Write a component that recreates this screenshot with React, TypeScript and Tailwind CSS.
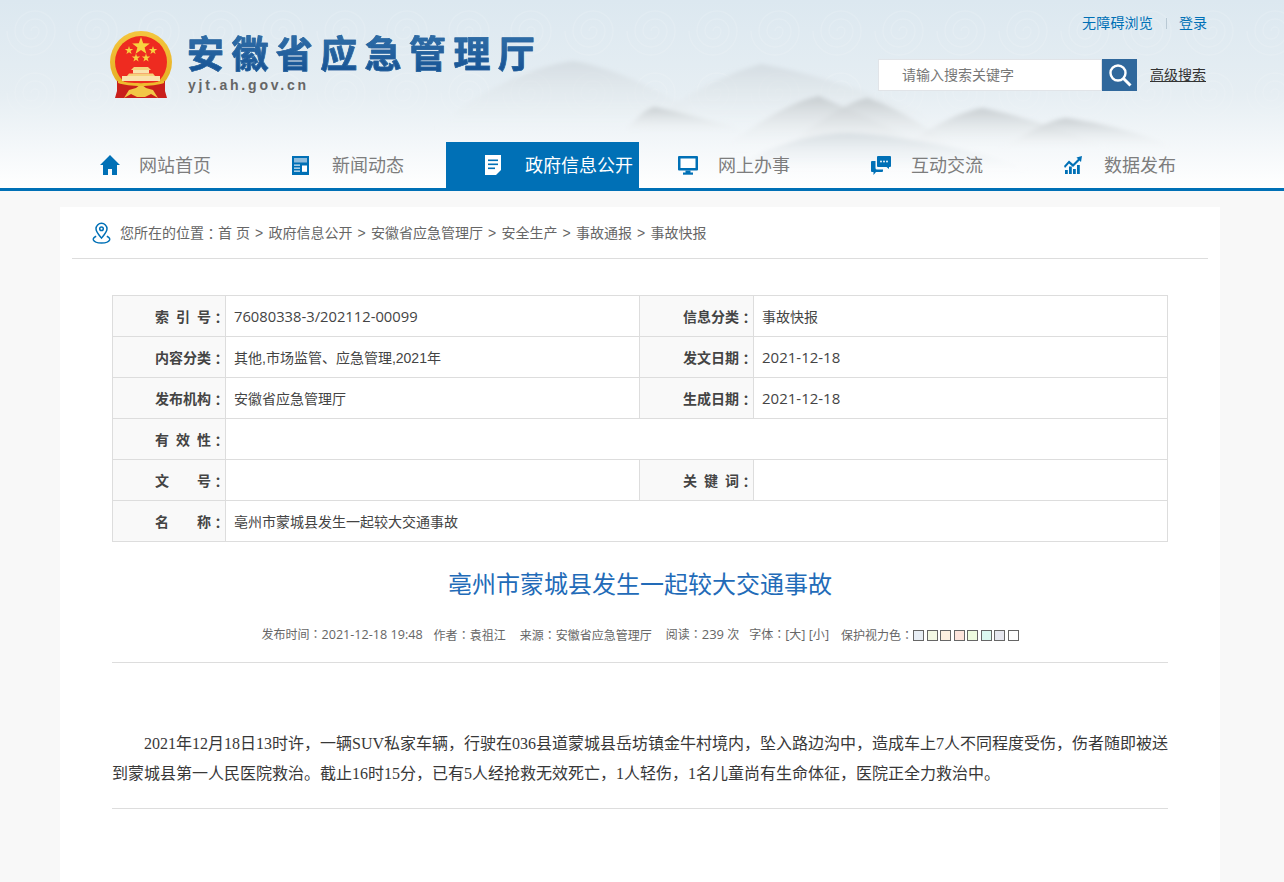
const cn = "font-['Liberation_Sans','Noto_Sans_CJK_SC',sans-serif]";
const latin = "font-['Open_Sans','Noto_Sans_CJK_SC',sans-serif]";

function Emblem() {
  return (
    <svg width="64" height="68" viewBox="0 0 64 68" className="shrink-0">
      <defs>
        <linearGradient id="ring" x1="0" y1="0" x2="0" y2="1">
          <stop offset="0" stopColor="#f4c63e" />
          <stop offset="1" stopColor="#e3ab20" />
        </linearGradient>
      </defs>
      <circle cx="32" cy="31" r="31" fill="url(#ring)" />
      <circle cx="32" cy="31" r="26" fill="#ee2b20" />
      <polygon points="32,6 34.2,12.2 40.8,12.4 35.6,16.4 37.4,22.8 32,19 26.6,22.8 28.4,16.4 23.2,12.4 29.8,12.2" fill="#f8d23f" />
      <polygon points="20,15 21,18 24.2,18 21.6,20 22.6,23 20,21.2 17.4,23 18.4,20 15.8,18 19,18" fill="#f8d23f" />
      <polygon points="44,15 45,18 48.2,18 45.6,20 46.6,23 44,21.2 41.4,23 42.4,20 39.8,18 43,18" fill="#f8d23f" />
      <polygon points="27,22.5 28,25.5 31.2,25.5 28.6,27.5 29.6,30.5 27,28.7 24.4,30.5 25.4,27.5 22.8,25.5 26,25.5" fill="#f8d23f" />
      <polygon points="37,22.5 38,25.5 41.2,25.5 38.6,27.5 39.6,30.5 37,28.7 34.4,30.5 35.4,27.5 32.8,25.5 36,25.5" fill="#f8d23f" />
      <path d="M25 36 L39 36 L42 39 L22 39 Z" fill="#f5d27c" />
      <rect x="24" y="39" width="16" height="3.5" fill="#f9e3ae" />
      <path d="M20 42.5 L44 42.5 L46 45 L18 45 Z" fill="#f5d27c" />
      <rect x="13" y="45" width="38" height="5" fill="#f9e3ae" />
      <path d="M8 50 C20 53 44 53 56 50 L56 60 L58 67 L6 67 L8 60 Z" fill="#c91f1b" />
      <path d="M15 67 L20 59 L27 57 L32 53 L37 57 L44 59 L49 67 L42 63 L36 66 L28 66 L22 63 Z" fill="#f2c747" />
      <path d="M9 49.5 C20 53 44 53 55 49.5 L55 52 C44 56 20 56 9 52 Z" fill="#eebb2e" />
    </svg>
  );
}

const hills = [
  { d: "M434 130 C470 95 530 66 573 61 C620 68 680 100 720 130 Z", fill: "url(#hillBack)" },
  { d: "M640 130 C680 95 730 72 761 64 C810 72 900 100 960 130 Z", fill: "url(#hillBack)" },
  { d: "M620 135 C635 120 645 108 655 107 C680 112 730 125 760 135 Z", fill: "url(#hill)" },
  { d: "M720 150 C760 120 795 100 819 96 C850 110 900 130 930 150 Z", fill: "url(#hill)" },
  { d: "M780 150 C820 120 850 100 868 98 C900 108 930 130 960 150 Z", fill: "url(#hill)" },
  { d: "M900 150 C930 125 965 110 983 108 C1020 115 1080 135 1110 150 Z", fill: "url(#hill)" },
  { d: "M1000 150 C1030 130 1050 120 1065 118 C1100 122 1150 135 1180 150 Z", fill: "url(#hill)" },
  { d: "M730 170 C770 145 810 133 850 133 C900 135 980 150 1030 170 Z", fill: "url(#hillBack)" },
];

function HeaderBackdrop() {
  return (
    <svg className="absolute inset-0 h-full w-full" viewBox="0 0 1284 188" preserveAspectRatio="none">
      <defs>
        <pattern id="swirl" width="62" height="62" patternUnits="userSpaceOnUse">
          <path d="M31 31 a4 4 0 0 1 8 0 a8 8 0 0 1 -16 0 a12 12 0 0 1 24 0 a16 16 0 0 1 -32 0 a20 20 0 0 1 40 0 a24 24 0 0 1 -48 0" fill="none" stroke="#ffffff" strokeOpacity="0.14" strokeWidth="1.4" />
        </pattern>
        <linearGradient id="fade" x1="0" y1="0" x2="0" y2="1">
          <stop offset="0" stopColor="#ffffff" stopOpacity="1" />
          <stop offset="0.42" stopColor="#ffffff" stopOpacity="1" />
          <stop offset="0.82" stopColor="#ffffff" stopOpacity="0" />
        </linearGradient>
        <mask id="patternFade">
          <rect width="1284" height="188" fill="url(#fade)" />
        </mask>
        <linearGradient id="hill" x1="0" y1="0" x2="0" y2="1">
          <stop offset="0" stopColor="#c4cacd" stopOpacity="0.9" />
          <stop offset="1" stopColor="#f5f7f8" stopOpacity="0" />
        </linearGradient>
        <linearGradient id="hillBack" x1="0" y1="0" x2="0" y2="1">
          <stop offset="0" stopColor="#d0d8dd" stopOpacity="0.75" />
          <stop offset="1" stopColor="#eef2f4" stopOpacity="0" />
        </linearGradient>
        <filter id="soft"><feGaussianBlur stdDeviation="2.2" /></filter>
      </defs>
      <rect width="1284" height="188" fill="url(#swirl)" mask="url(#patternFade)" />
      <g filter="url(#soft)">
        {hills.map((h) => (
          <path key={h.d} d={h.d} fill={h.fill} />
        ))}
      </g>
    </svg>
  );
}

function NavIcon({ name }: { name: string }) {
  if (name === "home")
    return (
      <svg width="22" height="22" viewBox="0 0 22 22" fill="#0070b6">
        <path d="M11 1 L21 11 L18 11 L18 21 L13 21 L13 15 L9 15 L9 21 L4 21 L4 11 L1 11 Z" />
      </svg>
    );
  if (name === "news")
    return (
      <svg width="17" height="19" viewBox="0 0 17 19">
        <rect width="17" height="19" fill="#0070b6" />
        <rect x="2" y="2" width="13" height="4.5" fill="#8fbcdc" />
        <rect x="2" y="8.5" width="6" height="1.3" fill="#cfe3f1" />
        <rect x="2" y="11.5" width="6" height="1.3" fill="#cfe3f1" />
        <rect x="2" y="14.5" width="6" height="1.3" fill="#cfe3f1" />
        <rect x="10" y="9.5" width="5" height="6.3" fill="#fff" />
      </svg>
    );
  if (name === "doc")
    return (
      <svg width="16" height="20" viewBox="0 0 16 20">
        <path d="M0 0 H16 V15 L11 20 H0 Z" fill="#fff" />
        <rect x="3" y="4.5" width="10" height="1.6" fill="#0070b6" />
        <rect x="3" y="8.5" width="10" height="1.6" fill="#0070b6" />
        <rect x="3" y="12.5" width="7" height="1.6" fill="#0070b6" />
      </svg>
    );
  if (name === "screen")
    return (
      <svg width="20" height="19" viewBox="0 0 20 19">
        <rect x="0" y="0" width="20" height="14.5" rx="1" fill="#0070b6" />
        <rect x="2.5" y="2.5" width="15" height="9.5" fill="#fff" />
        <rect x="7.5" y="14.5" width="5" height="2.5" fill="#0070b6" />
        <rect x="5" y="16.5" width="10" height="2.2" fill="#0070b6" />
      </svg>
    );
  if (name === "chat")
    return (
      <svg width="20" height="19" viewBox="0 0 20 19" fill="#0070b6">
        <path d="M6 1 a1 1 0 0 1 1 -1 H19 a1 1 0 0 1 1 1 V10 a1 1 0 0 1 -1 1 H18 V13 L15.5 11 H7 a1 1 0 0 1 -1 -1 Z" />
        <path d="M4.5 5 V12 a1.5 1.5 0 0 0 1.5 1.5 H12 V15 a1 1 0 0 1 -1 1 H5 L2.5 19 V16 H1 a1 1 0 0 1 -1 -1 V6 a1 1 0 0 1 1 -1 Z" />
        <circle cx="10" cy="5.5" r="0.9" fill="#fff" />
        <circle cx="13" cy="5.5" r="0.9" fill="#fff" />
        <circle cx="16" cy="5.5" r="0.9" fill="#fff" />
      </svg>
    );
  return (
    <svg width="18" height="18" viewBox="0 0 18 18" fill="#0070b6">
      <path d="M0 10 L5 4.5 L9 8 L14 3 L12.5 1.5 L18 0 L17 6 L15.5 4.5 L9 11 L5 7.5 L1 12 Z" />
      <rect x="1" y="14" width="2.8" height="4" />
      <rect x="5" y="10.5" width="2.8" height="7.5" />
      <rect x="9" y="13" width="2.8" height="5" />
      <rect x="13" y="9" width="2.8" height="9" />
    </svg>
  );
}

const navItems = [
  { label: "网站首页", icon: "home" },
  { label: "新闻动态", icon: "news" },
  { label: "政府信息公开", icon: "doc", active: true },
  { label: "网上办事", icon: "screen" },
  { label: "互动交流", icon: "chat" },
  { label: "数据发布", icon: "chart" },
];

function Header() {
  return (
    <header className="relative h-[191px] shrink-0 border-b-[3px] border-[#0070b6] bg-gradient-to-b from-[#dce8f0] via-[#e6eef3] via-50% to-white">
      <HeaderBackdrop />
      <div className="relative flex h-[142px] justify-between pl-[109px] pr-[77px]">
        <div className="flex items-start gap-[14px] pt-[31px]">
          <Emblem />
          <div className="pt-[3px]">
            <div className={`${cn} h-[44px] whitespace-nowrap bg-gradient-to-b from-[#2f6ea8] to-[#124f92] bg-clip-text text-[37px] leading-[44px] font-bold tracking-[7.4px] text-transparent [-webkit-text-stroke:0.6px_#2a659f]`}>
              安徽省应急管理厅
            </div>
            <div className="mt-[-2px] pl-[1px] font-['Liberation_Sans',sans-serif] text-[14px] leading-[18px] font-bold tracking-[2.8px] text-[#666666]">
              yjt.ah.gov.cn
            </div>
          </div>
        </div>
        <div className={`${cn} flex w-[329px] flex-col items-end pt-[13px]`}>
          <div className="flex h-[20px] items-center text-[14px] leading-[20px] text-[#0070b6]">
            <span className="tracking-[0.2px]">无障碍浏览</span>
            <span className="mx-[12.5px] h-[11px] w-px bg-[#b9c9d4]" />
            <span>登录</span>
          </div>
          <div className="mt-[26px] flex h-[32px] items-center self-start">
            <div className="flex h-[32px] w-[224px] items-center border border-[#e1e4e8] bg-white pl-[23px] text-[14px] text-[#777777]">
              请输入搜索关键字
            </div>
            <div className="flex h-[32px] w-[35px] items-center justify-center bg-[#30689c]">
              <svg width="26" height="26" viewBox="0 0 26 26" fill="none" stroke="#fff">
                <circle cx="11" cy="11" r="7.5" strokeWidth="2.4" />
                <path d="M16.5 16.5 L23.5 23.5" strokeWidth="3" />
              </svg>
            </div>
            <span className="ml-[13px] text-[14px] leading-[20px] text-[#333333] underline">高级搜索</span>
          </div>
        </div>
      </div>
      <nav className={`${cn} relative ml-[60px] flex h-[46px] w-[1158px]`}>
        {navItems.map((item) => (
          <div
            key={item.label}
            className={`flex h-[46px] w-[193px] items-center text-[18px] ${item.active ? "bg-[#0070b6] text-white" : "text-[#7d7d7d]"}`}
          >
            <span className="flex w-[79px] justify-start pl-[39px]">
              <NavIcon name={item.icon} />
            </span>
            <span className="whitespace-nowrap pt-[2px]">{item.label}</span>
          </div>
        ))}
      </nav>
    </header>
  );
}

const crumbs = ["首 页", "政府信息公开", "安徽省应急管理厅", "安全生产", "事故通报", "事故快报"];

function Colon({ className }: { className?: string }) {
  return <span className={`font-['Noto_Sans_CJK_TC',sans-serif] ${className ?? ""}`}>：</span>;
}

function Breadcrumb() {
  return (
    <div className="mx-[12px] flex h-[52px] items-center border-b border-[#dddddd] pl-[20px] text-[14px] text-[#666666]">
      <svg width="19" height="22" viewBox="0 0 19 22" fill="none" stroke="#0070b6" strokeWidth="1.5" className="mr-[9px] shrink-0">
        <path d="M9.5 16 C6.5 12.5 4 10 4 6.8 a5.5 5.5 0 0 1 11 0 C15 10 12.5 12.5 9.5 16 Z" />
        <circle cx="9.5" cy="6.8" r="1.8" />
        <path d="M4.2 14.2 C1.5 15.2 1 17 1.4 18 C2.4 20.3 6 21 9.5 21 C13 21 16.6 20.3 17.6 18 C18 17 17.5 15.2 14.8 14.2" />
      </svg>
      <span className="flex items-center pt-[2px]">
        <span>您所在的位置</span>
        <Colon />
        {crumbs.map((c, i) => (
          <span key={c} className="flex items-center">
            {i > 0 && <span className="flex w-[18.5px] justify-center text-[14px]">&gt;</span>}
            <span className="whitespace-pre">{c}</span>
          </span>
        ))}
      </span>
    </div>
  );
}

function Label({ children }: { children: string }) {
  return (
    <td className="h-[41px] border border-[#dddddd] bg-[#f9f9f9] pt-[2px] text-[14px] font-bold text-[#444444]">
      <div className="flex justify-end">
        <span className="flex w-[56px] justify-between">
          {Array.from(children).map((c) => (
            <span key={c}>{c}</span>
          ))}
        </span>
        <Colon className="w-[14px] text-center" />
      </div>
    </td>
  );
}

function Val({ children, span, wide }: { children?: string; span?: number; wide?: boolean }) {
  return (
    <td colSpan={span} className={`h-[41px] border border-[#dddddd] pl-[8px] text-[#444444] ${wide ? `${latin} text-[15px]` : "pt-[2px] text-[14px]"}`}>
      {children}
    </td>
  );
}

function InfoTable() {
  return (
    <table className={`${cn} w-[1056px] table-fixed border-collapse`}>
      <colgroup>
        <col className="w-[113px]" />
        <col className="w-[414px]" />
        <col className="w-[114px]" />
        <col />
      </colgroup>
      <tbody>
        <tr>
          <Label>索引号</Label>
          <td className={`${latin} h-[41px] border border-[#dddddd] pl-[8px] text-[14.75px] text-[#444444]`}>76080338-3/202112-00099</td>
          <Label>信息分类</Label>
          <Val>事故快报</Val>
        </tr>
        <tr>
          <Label>内容分类</Label>
          <Val>其他,市场监管、应急管理,2021年</Val>
          <Label>发文日期</Label>
          <Val wide>2021-12-18</Val>
        </tr>
        <tr>
          <Label>发布机构</Label>
          <Val>安徽省应急管理厅</Val>
          <Label>生成日期</Label>
          <Val wide>2021-12-18</Val>
        </tr>
        <tr>
          <Label>有效性</Label>
          <Val span={3} />
        </tr>
        <tr>
          <Label>文号</Label>
          <Val />
          <Label>关键词</Label>
          <Val />
        </tr>
        <tr>
          <Label>名称</Label>
          <Val span={3}>亳州市蒙城县发生一起较大交通事故</Val>
        </tr>
      </tbody>
    </table>
  );
}

const swatches = ["bg-[#e8eef5]", "bg-[#f3f8e4]", "bg-[#fdf0e0]", "bg-[#fde4dc]", "bg-[#eefbdf]", "bg-[#dcf8f0]", "bg-[#e6e7ef]", "bg-white"];

function Meta() {
  return (
    <div className={`${latin} mt-[24px] flex h-[18px] items-center justify-center whitespace-pre text-[12px] text-[#666666]`}>
      <span>发布时间<Colon /><span className="text-[12.6px]">2021-12-18 19:48</span></span>
      <span className="ml-[11px]">作者<Colon />袁祖江</span>
      <span className="ml-[14px]">来源<Colon />安徽省应急管理厅</span>
      <span className="ml-[14px]">阅读<Colon /><span className="text-[13px]">239</span> 次</span>
      <span className="ml-[10px]">字体<Colon /><span className="text-[12.6px]">[</span>大<span className="text-[12.6px]">] [</span>小<span className="text-[12.6px]">]</span></span>
      <span className="ml-[12px]">保护视力色<Colon /></span>
      <span className="flex gap-[2.5px]">
        {swatches.map((s) => (
          <span key={s} className={`h-[11px] w-[11px] border border-[#666666] ${s}`} />
        ))}
      </span>
    </div>
  );
}

export default function App() {
  return (
    <div className="flex h-[882px] flex-col overflow-hidden bg-[#f8f8f8]">
      <Header />
      <main className={`${cn} ml-[60px] mt-[16px] w-[1160px] flex-1 bg-white`}>
        <Breadcrumb />
        <div className="px-[52px] pt-[36px]">
          <InfoTable />
          <h1 className="mt-[26px] text-center text-[24px] leading-[34px] font-normal text-[#226bb8]">
            亳州市蒙城县发生一起较大交通事故
          </h1>
          <Meta />
          <div className="mt-[18px] border-t border-[#dddddd]" />
          <div className="mt-[66px] border-b border-[#dddddd] pb-[19px] font-['Liberation_Serif','Noto_Sans_CJK_SC',serif] text-[16px] leading-[30px] text-[#383838]">
            <p className="text-justify indent-[32px]">
              2021年12月18日13时许，一辆SUV私家车辆，行驶在036县道蒙城县岳坊镇金牛村境内，坠入路边沟中，造成车上7人不同程度受伤，伤者随即被送到蒙城县第一人民医院救治。截止16时15分，已有5人经抢救无效死亡，1人轻伤，1名儿童尚有生命体征，医院正全力救治中。
            </p>
          </div>
        </div>
      </main>
    </div>
  );
}
